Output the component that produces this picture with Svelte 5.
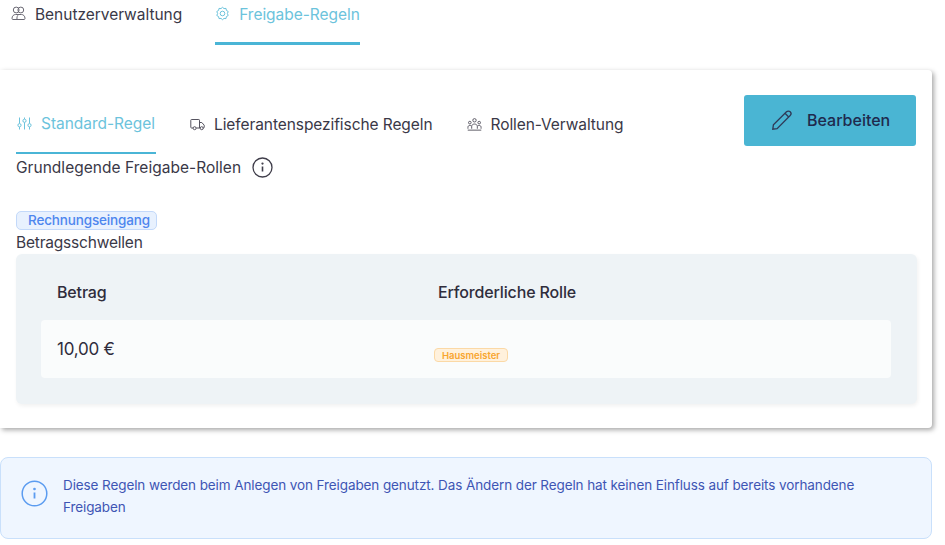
<script>
	const rows = [{ amount: '10,00 €', role: 'Hausmeister' }];
</script>

<div class="page">
	<nav class="topTabs">
		<div class="topTab">
			<svg width="15" height="15" viewBox="0 0 15 15" fill="none" stroke="#6a6873" stroke-width="1">
				<circle cx="5.200" cy="4" r="2.900" />
				<circle cx="9.800" cy="4" r="2.900" />
				<path d="M1 12.500c0-2.500 1.600-4 3.600-4h5.800c2 0 3.600 1.500 3.600 4 0 .6-.4 1-1 1H2c-.6 0-1-.4-1-1z" />
				<path d="M7.500 8.700c-1.200.8-1.800 2.600-1.500 4.800" />
			</svg>
			<span>Benutzerverwaltung</span>
		</div>
		<div class="topTab active">
			<svg width="15" height="15" viewBox="0 0 15 15" fill="none" stroke="#6cc3dc" stroke-width="1">
				<path d="M7.500 1.300l1.500 1.300 2-.2.400 2 1.800 1.100-.8 2 .8 2-1.800 1.100-.4 2-2-.2-1.500 1.300L6 12.400l-2 .2-.4-2L1.800 9.500l.8-2-.8-2 1.800-1.100.4-2 2 .2z" />
				<circle cx="7.500" cy="7.500" r="2.300" />
			</svg>
			<span>Freigabe-Regeln</span>
		</div>
	</nav>

	<section class="card">
		<div class="cardHead">
			<div class="subTabs">
				<div class="subTab active">
					<svg width="15" height="15" viewBox="0 0 15 15" fill="none" stroke="#6cc3dc" stroke-width="1">
						<path d="M2.500 1.500v6M2.500 11v2.500M7.500 1.500v1.500M7.500 6.500v7M12.500 1.500v6M12.500 11v2.500" />
						<circle cx="2.500" cy="9.200" r="1.600" />
						<circle cx="7.500" cy="4.800" r="1.600" />
						<circle cx="12.500" cy="9.200" r="1.600" />
					</svg>
					<span>Standard-Regel</span>
				</div>
				<div class="subTab">
					<svg width="15" height="15" viewBox="0 0 15 15" fill="none" stroke="#55535f" stroke-width="1">
						<path d="M3 11H1.500a.7.700 0 0 1-.7-.7V3.200a.7.700 0 0 1 .7-.7h7.300a.7.700 0 0 1 .7.700V11H6.200M9.500 5.500h2.300l2.400 2.700v2.100a.7.700 0 0 1-.7.700h-.6M9.500 11h.8" />
						<circle cx="4.600" cy="11.200" r="1.500" />
						<circle cx="11.700" cy="11.200" r="1.500" />
					</svg>
					<span>Lieferantenspezifische Regeln</span>
				</div>
				<div class="subTab">
					<svg width="15" height="15" viewBox="0 0 16 15" fill="none" stroke="#55535f" stroke-width="1">
						<circle cx="8" cy="3" r="1.800" />
						<circle cx="3" cy="5.500" r="1.400" />
						<circle cx="13" cy="5.500" r="1.400" />
						<path d="M5 12V9.500c0-1.400 1.200-2.500 3-2.500s3 1.100 3 2.500V12M1 12v-1.500C1 9.200 1.800 8.500 3 8.500c.7 0 1.300.2 1.700.6M15 12v-1.500c0-1.300-.8-2-2-2-.7 0-1.300.2-1.700.6M.8 13.500h14.400" />
					</svg>
					<span>Rollen-Verwaltung</span>
				</div>
			</div>
			<button class="editBtn" type="button">
				<svg width="24" height="24" viewBox="0 0 24 24" fill="none" stroke="#2f3a58" stroke-width="1.300">
					<path d="M2.800 21.200l.6-4.300L16.500 3.800a2.600 2.600 0 0 1 3.700 3.700L7.100 20.600z" />
					<path d="M15 5.300l3.700 3.700" />
				</svg>
				<span>Bearbeiten</span>
			</button>
		</div>

		<div class="titleLine">
			<span>Grundlegende Freigabe-Rollen</span>
			<svg width="21" height="21" viewBox="0 0 21 21" fill="none" stroke="#3f3d4a" stroke-width="1.300">
				<circle cx="10.500" cy="10.500" r="9.500" />
				<path d="M10.500 9.500v5" stroke-width="1.600" />
				<circle cx="10.500" cy="6.600" r=".5" />
			</svg>
		</div>

		<span class="blueBadge">Rechnungseingang</span>
		<h3 class="thresholdTitle">Betragsschwellen</h3>

		<div class="panel">
			<div class="panelHead">
				<span>Betrag</span>
				<span>Erforderliche Rolle</span>
			</div>
			{#each rows as row}
				<div class="panelRow">
					<span class="amount">{row.amount}</span>
					<div class="roleCell"><span class="roleBadge">{row.role}</span></div>
				</div>
			{/each}
		</div>
	</section>

	<div class="notice">
		<svg width="27" height="27" viewBox="0 0 27 27" fill="none" stroke="#5b9cf0" stroke-width="1.500">
			<circle cx="13.500" cy="13.500" r="12.300" />
			<path d="M13.500 12.500v6" stroke-width="1.800" />
			<circle cx="13.500" cy="9" r=".6" />
		</svg>
		<p>Diese Regeln werden beim Anlegen von Freigaben genutzt. Das Ändern der Regeln hat keinen Einfluss auf bereits vorhandene Freigaben</p>
	</div>
</div>

<style>
	:global(body) {
		background: #fff;
	}
	.page {
		width: 945px;
		height: 545px;
		overflow: hidden;
		font-family: Inter, 'Noto Sans', sans-serif;
		color: #3a3847;
	}
	.topTabs {
		display: flex;
		height: 45px;
		padding-left: 11px;
		gap: 33px;
	}
	.topTab {
		display: flex;
		align-items: flex-start;
		gap: 9px;
		padding-top: 5px;
		font-size: 15.500px;
		line-height: 20px;
		letter-spacing: -0.03px;
	}
	.topTab svg {
		margin-top: 1px;
	}
	.topTab.active {
		color: #6cc3dc;
		border-bottom: 3px solid #4ab5d6;
		box-sizing: border-box;
	}
	.card {
		box-sizing: border-box;
		width: 932px;
		height: 358px;
		margin-top: 25px;
		padding: 0 16px 0 16px;
		background: #fff;
		border-radius: 0 4px 4px 0;
		box-shadow: 2px 2px 5px rgba(0, 0, 0, 0.35);
	}
	.cardHead {
		display: flex;
		justify-content: space-between;
		align-items: flex-start;
		height: 84px;
	}
	.subTabs {
		display: flex;
		gap: 34px;
	}
	.subTab {
		display: flex;
		align-items: center;
		gap: 9px;
		height: 84px;
		box-sizing: border-box;
		padding-top: 24px;
		font-size: 15.500px;
		letter-spacing: -0.08px;
	}
	.subTab.active {
		width: 140px;
		padding-left: 1px;
		color: #6cc3dc;
		border-bottom: 2px solid #4ab5d6;
		letter-spacing: -0.03px;
	}
	.editBtn {
		display: flex;
		align-items: center;
		gap: 13px;
		box-sizing: border-box;
		width: 172px;
		height: 51px;
		margin-top: 25px;
		padding: 0 0 2px 26px;
		border: none;
		border-radius: 3px;
		background: #4ab5d3;
		color: #1f2a4d;
		font: inherit;
		font-size: 16px;
		font-weight: 500;
	}
	.titleLine {
		display: flex;
		align-items: center;
		gap: 11px;
		height: 28px;
		margin-top: -1px;
		font-size: 15.500px;
		letter-spacing: 0.03px;
	}
	.blueBadge {
		display: block;
		box-sizing: border-box;
		width: 141px;
		height: 19px;
		margin-top: 30px;
		padding-left: 11px;
		border: 1px solid #c3d9fa;
		border-radius: 5px;
		background: #e8f1fe;
		color: #4d86ee;
		font-size: 13.500px;
		font-weight: 500;
		line-height: 17px;
		letter-spacing: -0.15px;
	}
	.thresholdTitle {
		margin: 0;
		height: 24px;
		font-size: 15.500px;
		font-weight: 400;
		line-height: 26px;
		letter-spacing: -0.2px;
	}
	.panel {
		box-sizing: border-box;
		width: 901px;
		height: 150px;
		padding: 0 26px 0 25px;
		background: #eef3f6;
		border-radius: 6px;
		box-shadow: 1px 2px 4px rgba(0, 0, 0, 0.06);
	}
	.panelHead,
	.panelRow {
		display: grid;
		grid-template-columns: 381px 1fr;
		padding-left: 16px;
	}
	.panelHead {
		box-sizing: border-box;
		height: 66px;
		padding-top: 10px;
		align-items: center;
		color: #2f2d3c;
		font-size: 16px;
		font-weight: 500;
		letter-spacing: -0.15px;
	}
	.panelRow {
		height: 58px;
		align-items: center;
		background: #fafcfc;
		border-radius: 4px;
	}
	.amount {
		color: #2f2d3c;
		font-size: 17px;
		letter-spacing: -0.25px;
	}
	.roleCell {
		margin-top: 12px;
		margin-left: -4px;
	}
	.roleBadge {
		display: block;
		box-sizing: border-box;
		height: 14px;
		width: 74px;
		border: 1px solid #fbd9a6;
		border-radius: 4px;
		background: #fff1dc;
		color: #f8a52f;
		font-size: 9.500px;
		font-weight: 600;
		line-height: 13px;
		text-align: center;
	}
	.notice {
		box-sizing: border-box;
		display: flex;
		align-items: flex-start;
		gap: 15px;
		width: 932px;
		height: 82px;
		margin-top: 29px;
		padding: 22px 20px 0 20px;
		background: #eff6ff;
		border: 1px solid #c9e0fb;
		border-radius: 8px;
		color: #3e55b4;
	}
	.notice p {
		margin: -6px 0 0;
		font-size: 13.500px;
		line-height: 22px;
		letter-spacing: -0.1px;
		width: 830px;
	}
</style>
